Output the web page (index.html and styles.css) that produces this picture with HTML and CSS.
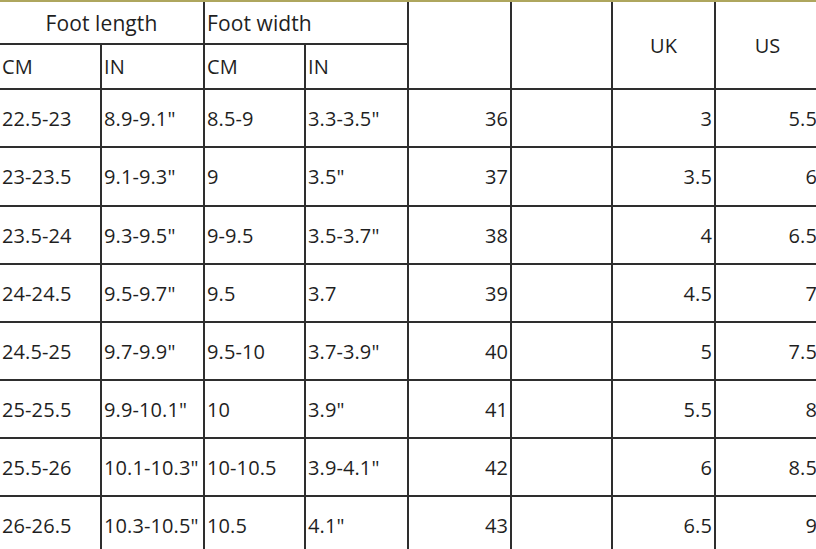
FILE: index.html
```html
<!DOCTYPE html>
<html>
<head>
<meta charset="utf-8">
<link rel="stylesheet" href="styles.css">
</head>
<body>
<div class="chart">
  <div class="c h-group center span2">Foot length</div>
  <div class="c h-group span2">Foot width</div>
  <div class="c tall"></div>
  <div class="c tall"></div>
  <div class="c tall center">UK</div>
  <div class="c tall center last">US</div>
  <div class="c">CM</div>
  <div class="c">IN</div>
  <div class="c">CM</div>
  <div class="c">IN</div>

  <div class="c">22.5-23</div><div class="c">8.9-9.1"</div><div class="c">8.5-9</div><div class="c">3.3-3.5"</div><div class="c r">36</div><div class="c"></div><div class="c r">3</div><div class="c r last">5.5</div>
  <div class="c">23-23.5</div><div class="c">9.1-9.3"</div><div class="c">9</div><div class="c">3.5"</div><div class="c r">37</div><div class="c"></div><div class="c r">3.5</div><div class="c r last">6</div>
  <div class="c">23.5-24</div><div class="c">9.3-9.5"</div><div class="c">9-9.5</div><div class="c">3.5-3.7"</div><div class="c r">38</div><div class="c"></div><div class="c r">4</div><div class="c r last">6.5</div>
  <div class="c">24-24.5</div><div class="c">9.5-9.7"</div><div class="c">9.5</div><div class="c">3.7</div><div class="c r">39</div><div class="c"></div><div class="c r">4.5</div><div class="c r last">7</div>
  <div class="c">24.5-25</div><div class="c">9.7-9.9"</div><div class="c">9.5-10</div><div class="c">3.7-3.9"</div><div class="c r">40</div><div class="c"></div><div class="c r">5</div><div class="c r last">7.5</div>
  <div class="c">25-25.5</div><div class="c">9.9-10.1"</div><div class="c">10</div><div class="c">3.9"</div><div class="c r">41</div><div class="c"></div><div class="c r">5.5</div><div class="c r last">8</div>
  <div class="c">25.5-26</div><div class="c">10.1-10.3"</div><div class="c">10-10.5</div><div class="c">3.9-4.1"</div><div class="c r">42</div><div class="c"></div><div class="c r">6</div><div class="c r last">8.5</div>
  <div class="c">26-26.5</div><div class="c">10.3-10.5"</div><div class="c">10.5</div><div class="c">4.1"</div><div class="c r">43</div><div class="c"></div><div class="c r">6.5</div><div class="c r last">9</div>
</div>
</body>
</html>
```

FILE: styles.css
```css
html, body {
  margin: 0;
  padding: 0;
  background: #ffffff;
}

body {
  width: 816px;
  height: 549px;
  overflow: hidden;
}

.chart {
  display: grid;
  grid-template-columns: 102px 103px 101px 103px 103px 101px 103px 103px;
  grid-template-rows: 43px 45px 58px 59px 58px 58px 58px 58px 58px 58px;
  border-top: 2px solid #aea65e;
  font-family: "Open Sans", "Noto Sans", "DejaVu Sans", sans-serif;
  font-size: 20px;
  color: #1f1f1f;
  letter-spacing: 0.1px;
}

.c {
  box-sizing: border-box;
  border-right: 2px solid #2e2e2e;
  border-bottom: 2px solid #2e2e2e;
  display: flex;
  align-items: center;
  padding-left: 2px;
  white-space: nowrap;
  overflow: hidden;
}

.span2 {
  grid-column: span 2;
}

.tall {
  grid-row: span 2;
}

.center {
  justify-content: center;
  padding-left: 0;
}

.h-group {
  font-size: 21px;
}

.r {
  justify-content: flex-end;
  padding-left: 0;
  padding-right: 2px;
}

.last {
  border-right: none;
}
```
